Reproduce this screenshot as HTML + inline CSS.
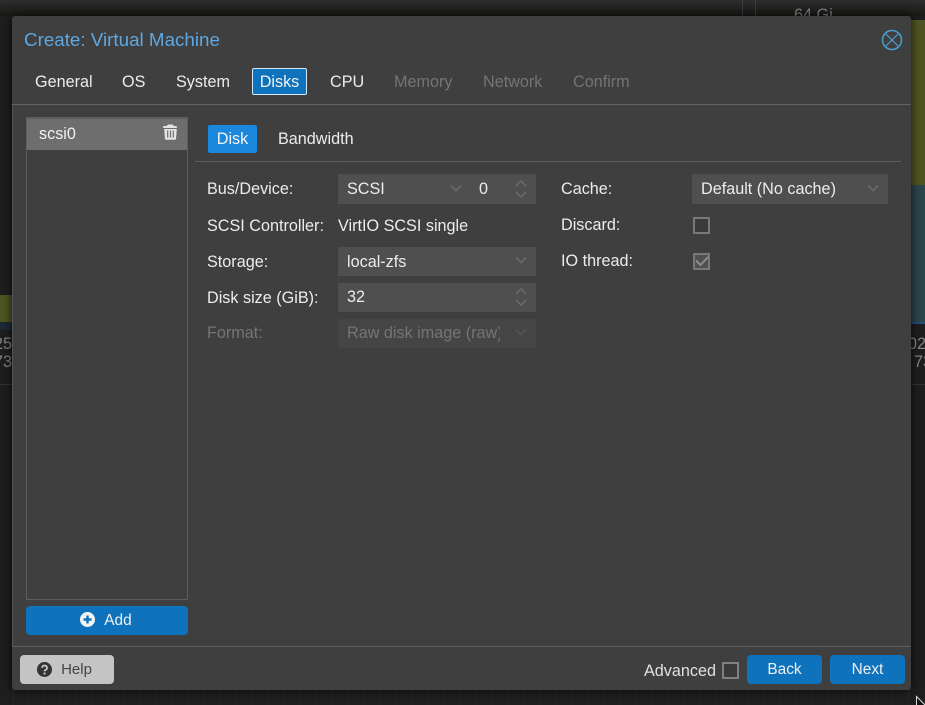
<!DOCTYPE html>
<html><head><meta charset="utf-8"><style>
html,body{margin:0;padding:0}
body{width:925px;height:705px;overflow:hidden;background:#1e1e1e;position:relative;font-family:"Liberation Sans",sans-serif;font-size:16.2px;color:#ececec}
.a{position:absolute;white-space:nowrap}
.t{position:absolute;white-space:nowrap;line-height:20px;height:20px}
.field{position:absolute;background:#4f4f4f}
.dim{color:#747474}
.btn{position:absolute;background:#0e72bd;border-radius:4px;color:#f0f0f0;text-align:center}
.cb{position:absolute;box-sizing:border-box;width:17px;height:17px;border:2px solid #787878;background:#3a3a3a}
svg{position:absolute;overflow:visible}
</style></head><body>
<div class="a" style="left:0;top:0;width:925px;height:16px;background:linear-gradient(#2c2c2c 0,#2c2c2c 3px,#262626 4px,#1d1d1b 14px,#161614 16px)"></div>
<div class="a" style="left:742px;top:0;width:1px;height:16px;background:#3c3c3c"></div>
<div class="a" style="left:755px;top:0;width:1px;height:16px;background:#3c3c3c"></div>
<div class="t" style="left:794px;top:5px;color:#808080">64 Gi</div>
<div class="a" style="left:0;top:295px;width:12px;height:27px;background:#4f5522"></div>
<div class="a" style="left:0;top:322px;width:12px;height:8px;background:#1d2a33"></div>
<div class="t" style="left:-6px;top:334px;color:#858585">25</div>
<div class="t" style="left:-6px;top:352px;color:#858585">73</div>
<div class="a" style="left:911px;top:20px;width:14px;height:165px;background:#4f5522"></div>
<div class="a" style="left:911px;top:185px;width:14px;height:137px;background:#2c464e"></div>
<div class="a" style="left:911px;top:322px;width:14px;height:2px;background:#1f4f78"></div>
<div class="t" style="left:908px;top:334px;color:#858585">025</div>
<div class="t" style="left:914px;top:352px;color:#858585">73</div>
<div class="a" style="left:0;top:384px;width:12px;height:1px;background:#333"></div>
<div class="a" style="left:911px;top:384px;width:14px;height:1px;background:#333"></div>
<div class="a" style="left:12px;top:690px;width:900px;height:15px;background:repeating-linear-gradient(90deg,#262626 0,#262626 1px,#1f1f1f 1px,#1f1f1f 16px)"></div>

<div class="a" style="left:12px;top:16px;width:899px;height:674px;background:#3f3f3f;border-radius:3px;box-shadow:0 0 10px rgba(0,0,0,.8)"></div>

<div class="a" style="left:24px;top:28px;font-size:18.8px;line-height:24px;color:#5ea7e0">Create: Virtual Machine</div>
<svg style="left:881px;top:29px" width="22" height="22" viewBox="0 0 22 22" fill="none" stroke="#4a9fcf"><circle cx="11" cy="11" r="9.5" stroke-width="1.5"/><path d="M5 5L17 17M17 5L5 17" stroke-width="1.2"/></svg>

<div class="t" style="left:35px;top:72px">General</div>
<div class="t" style="left:122px;top:72px">OS</div>
<div class="t" style="left:176px;top:72px">System</div>
<div class="a" style="left:252px;top:68px;width:53px;height:25px;background:#0e72bd;border:1px solid #d5e8f5;border-radius:2px;line-height:26px;text-align:center;color:#f2f2f2">Disks</div>
<div class="t" style="left:330px;top:72px">CPU</div>
<div class="t dim" style="left:394px;top:72px">Memory</div>
<div class="t dim" style="left:483px;top:72px">Network</div>
<div class="t dim" style="left:573px;top:72px">Confirm</div>
<div class="a" style="left:12px;top:104px;width:899px;height:1px;background:#646464"></div>

<div class="a" style="left:12px;top:105px;width:1px;height:541px;background:#555"></div>
<div class="a" style="left:26px;top:117px;width:160px;height:481px;border:1px solid #5e5e5e"></div>
<div class="a" style="left:27px;top:118px;width:160px;height:32px;background:#6e6e6e;border-top:1px solid #5f5f5f;box-sizing:border-box"></div>
<div class="t" style="left:39px;top:124px;color:#f0f0f0">scsi0</div>
<svg style="left:163px;top:124px" width="15" height="16" viewBox="0 0 15 16"><path fill="#e4e4e4" d="M5.2 0.5h4.6l.8 1.5h3.2v2H.2V2h3.2zM1.2 5h12.6l-.8 10a1 1 0 0 1-1 .8H3a1 1 0 0 1-1-.8z"/><path d="M4.7 6.5v7M7.5 6.5v7M10.3 6.5v7" stroke="#6e6e6e" stroke-width="1.2"/></svg>

<div class="a" style="left:208px;top:125px;width:49px;height:28px;background:#1a88dc;border-radius:2px;line-height:28px;text-align:center;color:#f4f4f4">Disk</div>
<div class="t" style="left:278px;top:129px">Bandwidth</div>
<div class="a" style="left:195px;top:161px;width:706px;height:1px;background:#5e5e5e"></div>

<div class="t" style="left:207px;top:179px">Bus/Device:</div>
<div class="field" style="left:338px;top:174px;width:198px;height:30px"></div>
<div class="t" style="left:347px;top:179px">SCSI</div>
<svg style="left:450px;top:184px" width="12" height="9" fill="none" stroke="#6c6c6c" stroke-width="1.5"><path d="M1 1.5L6 6.5L11 1.5"/></svg>
<div class="t" style="left:479px;top:179px">0</div>
<svg style="left:515px;top:179px" width="12" height="20" fill="none" stroke="#6c6c6c" stroke-width="1.5"><path d="M1 7L6 2L11 7M1 13L6 18L11 13"/></svg>

<div class="t" style="left:207px;top:216px">SCSI Controller:</div>
<div class="t" style="left:338px;top:216px">VirtIO SCSI single</div>

<div class="t" style="left:207px;top:252px">Storage:</div>
<div class="field" style="left:338px;top:247px;width:198px;height:29px"></div>
<div class="t" style="left:347px;top:252px">local-zfs</div>
<svg style="left:515px;top:256px" width="12" height="9" fill="none" stroke="#6c6c6c" stroke-width="1.5"><path d="M1 1.5L6 6.5L11 1.5"/></svg>

<div class="t" style="left:207px;top:288px">Disk size (GiB):</div>
<div class="field" style="left:338px;top:283px;width:198px;height:29px"></div>
<div class="t" style="left:347px;top:287px">32</div>
<svg style="left:515px;top:287px" width="12" height="20" fill="none" stroke="#6c6c6c" stroke-width="1.5"><path d="M1 7L6 2L11 7M1 13L6 18L11 13"/></svg>

<div class="t dim" style="left:207px;top:323px">Format:</div>
<div class="field" style="left:338px;top:319px;width:198px;height:29px;background:#454545"></div>
<div class="a dim" style="left:347px;top:323px;width:153px;height:20px;line-height:20px;overflow:hidden">Raw disk image (raw)</div>
<svg style="left:515px;top:328px" width="12" height="9" fill="none" stroke="#555" stroke-width="1.5"><path d="M1 1.5L6 6.5L11 1.5"/></svg>

<div class="t" style="left:561px;top:179px">Cache:</div>
<div class="field" style="left:692px;top:174px;width:196px;height:30px"></div>
<div class="t" style="left:701px;top:179px">Default (No cache)</div>
<svg style="left:867px;top:184px" width="12" height="9" fill="none" stroke="#6c6c6c" stroke-width="1.5"><path d="M1 1.5L6 6.5L11 1.5"/></svg>

<div class="t" style="left:561px;top:215px">Discard:</div>
<div class="cb" style="left:693px;top:217px"></div>
<div class="t" style="left:561px;top:251px">IO thread:</div>
<div class="cb" style="left:693px;top:253px;background:#505050"></div>
<svg style="left:695px;top:255px" width="14" height="13" fill="none" stroke="#8e8e8e" stroke-width="2"><path d="M1 5.5L5.5 10L13 2"/></svg>

<div class="btn" style="left:26px;top:606px;width:162px;height:29px;line-height:29px;font-size:15.4px"><span style="margin-left:22px">Add</span></div>
<svg style="left:80px;top:612px" width="15" height="15" viewBox="0 0 15 15"><circle cx="7.5" cy="7.5" r="7.5" fill="#f4f4f4"/><path d="M3.5 7.5h8M7.5 3.5v8" stroke="#0e72bd" stroke-width="2.4"/></svg>

<div class="a" style="left:12px;top:646px;width:899px;height:1px;background:#5e5e5e"></div>
<div class="btn" style="left:20px;top:655px;width:94px;height:29px;line-height:29px;background:#c4c4c4;color:#454545;font-size:15px"><span style="margin-left:19px">Help</span></div>
<svg style="left:37px;top:662px" width="15" height="15" viewBox="0 0 15 15"><circle cx="7.5" cy="7.5" r="7.5" fill="#333"/><path d="M5 5.8a2.5 2.3 0 1 1 3.6 2.1c-.8.4-1.1.8-1.1 1.5" fill="none" stroke="#c4c4c4" stroke-width="1.8"/><rect x="6.5" y="10.5" width="2" height="2" fill="#c4c4c4"/></svg>

<div class="t" style="left:644px;top:661px;color:#e0e0e0">Advanced</div>
<div class="cb" style="left:722px;top:662px;border-color:#808080"></div>
<div class="btn" style="left:747px;top:655px;width:75px;height:29px;line-height:29px;font-size:15.4px">Back</div>
<div class="btn" style="left:830px;top:655px;width:75px;height:29px;line-height:29px;font-size:15.4px">Next</div>
<svg style="left:916px;top:696px" width="9" height="9" fill="#111" stroke="#ddd"><path d="M0.5 0.5L12 12H0.5z"/></svg>
</body></html>
